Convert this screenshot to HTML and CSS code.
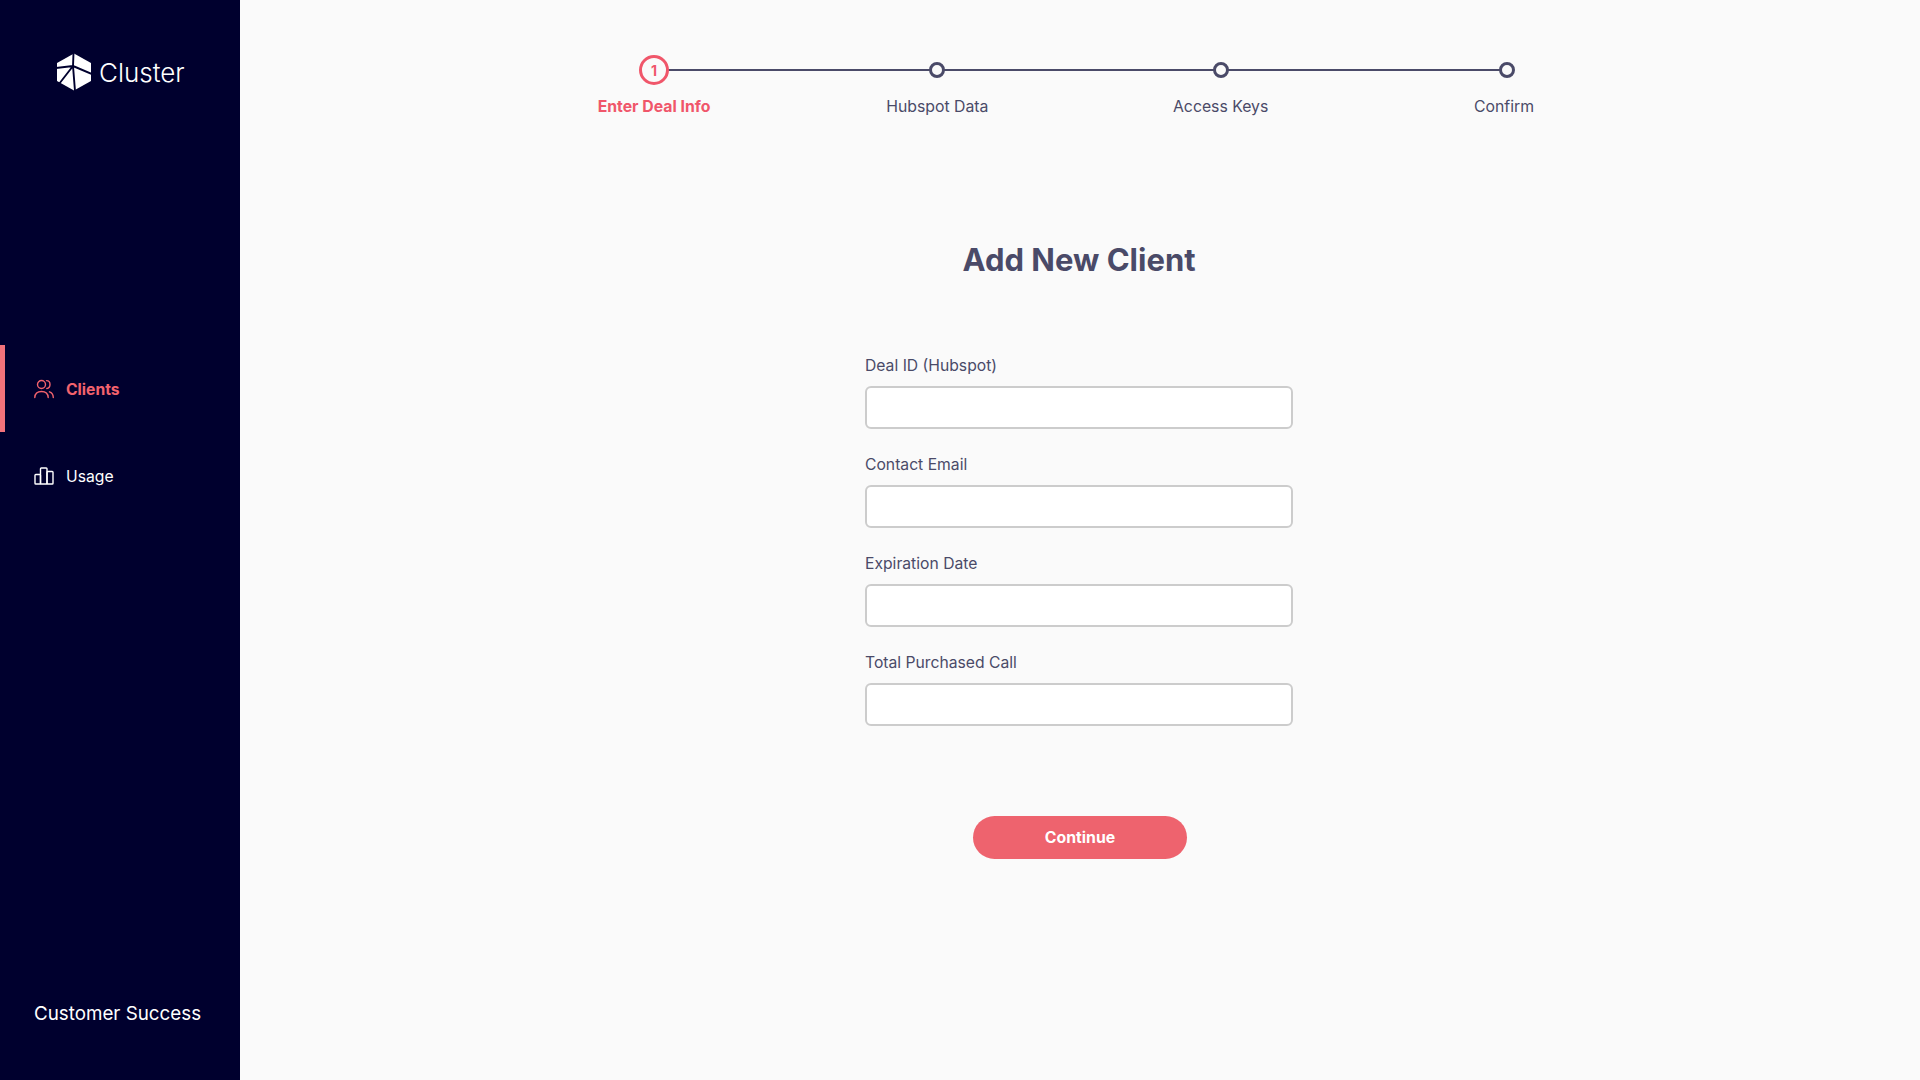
FILE: index.html
```html
<!DOCTYPE html>
<html lang="en">
<head>
    <meta charset="UTF-8">
    <meta name="viewport" content="width=device-width, initial-scale=1.0">
    <title>Cluster - Add New Client</title>
    <link rel="stylesheet" href="styles.css">
</head>
<body>
    <aside class="sidebar">
        <div class="logo">
            <svg class="logo-mark" width="36" height="38" viewBox="0 0 36 38">
                <polygon points="18,0.5 35,10 35,28 18,37.5 1,28 1,10" fill="#fff"/>
                <path d="M17 13 L17.5 0 M17 13 L0 15 M17 13 L3 31 M17 13 L19 38 M17 13 L36 21" stroke="#00002e" stroke-width="1.9" fill="none"/>
            </svg>
            <span class="logo-text">Cluster</span>
        </div>
        <nav class="nav">
            <a class="nav-item active" href="#">
                <svg width="20" height="20" viewBox="0 0 20 20" fill="none" stroke="currentColor" stroke-width="1.4" stroke-linecap="round">
                    <circle cx="7.5" cy="5.5" r="4"/>
                    <path d="M0.8 18.5 C1 14.5 3.5 12.5 7.5 12.5 C11.5 12.5 14 14.5 14.2 18.5"/>
                    <path d="M12.5 1.6 C15 1.6 16 3.6 16 5.5 C16 7.4 15 9.2 12.8 9.5"/>
                    <path d="M15.5 12.8 C17.8 13.5 19.2 15.5 19.3 18.5"/>
                </svg>
                <span>Clients</span>
            </a>
            <a class="nav-item" href="#">
                <svg width="20" height="18" viewBox="0 0 20 18" fill="none" stroke="currentColor" stroke-width="1.4" stroke-linejoin="round">
                    <rect x="1" y="7.5" width="5.5" height="9.5" rx="0.8"/>
                    <rect x="6.5" y="1" width="6.5" height="16" rx="0.8"/>
                    <rect x="13" y="4.5" width="6" height="12.5" rx="0.8"/>
                </svg>
                <span>Usage</span>
            </a>
        </nav>
        <div class="team">Customer Success</div>
    </aside>

    <main class="main">
        <ol class="stepper">
            <li class="step current"><span class="dot">1</span><span class="step-label">Enter Deal Info</span></li>
            <li class="step"><span class="dot"></span><span class="step-label">Hubspot Data</span></li>
            <li class="step"><span class="dot"></span><span class="step-label">Access Keys</span></li>
            <li class="step last"><span class="dot"></span><span class="step-label">Confirm</span></li>
        </ol>

        <h1>Add New Client</h1>

        <form class="client-form" onsubmit="return false;">
            <label class="field">Deal ID (Hubspot)<input type="text"></label>
            <label class="field">Contact Email<input type="text"></label>
            <label class="field">Expiration Date<input type="text"></label>
            <label class="field">Total Purchased Call<input type="text"></label>
            <button class="continue" type="submit">Continue</button>
        </form>
    </main>
</body>
</html>
```

FILE: styles.css
```css
* {
    box-sizing: border-box;
}

body {
    margin: 0;
    height: 1080px;
    display: flex;
    overflow: hidden;
    font-family: Inter, "Open Sans", sans-serif;
    background-color: #fafafa;
    color: #4a4a68;
}

.sidebar {
    width: 240px;
    flex-shrink: 0;
    display: flex;
    flex-direction: column;
    background-color: #00002e;
    color: #fff;
}

.logo {
    display: flex;
    align-items: center;
    gap: 7px;
    padding: 53px 0 0 56px;
}

.logo-text {
    font-size: 26px;
    font-weight: 300;
}

.nav {
    margin-top: 254px;
}

.nav-item {
    height: 87px;
    display: flex;
    align-items: center;
    gap: 12px;
    border-left: 5px solid transparent;
    padding-left: 29px;
    color: #fff;
    font-size: 15.7px;
    text-decoration: none;
}

.nav-item span {
    padding-top: 2px;
}

.nav-item.active {
    border-left-color: #f2727b;
    color: #f2626d;
    font-weight: 700;
}

.team {
    margin-top: auto;
    padding: 0 0 55px 34px;
    font-size: 18.8px;
}

.main {
    flex: 1;
    display: flex;
    flex-direction: column;
    align-items: center;
    padding-right: 2px;
}

.stepper {
    position: relative;
    width: 970px;
    margin: 55px 0 0;
    padding: 0;
    display: flex;
    justify-content: space-between;
    list-style: none;
}

.stepper::before {
    content: "";
    position: absolute;
    left: 60px;
    right: 57px;
    top: 14px;
    height: 2px;
    background-color: #4a4a68;
}

.step {
    position: relative;
    width: 120px;
    display: flex;
    flex-direction: column;
    align-items: center;
    font-size: 15.8px;
}

.dot {
    width: 16px;
    height: 16px;
    margin: 7px 0;
    border: 3px solid #4a4a68;
    border-radius: 50%;
    background-color: #fafafa;
}

.step.last .dot {
    margin-left: 6px;
}

.step.current .dot {
    width: 30px;
    height: 30px;
    margin: 0;
    display: flex;
    align-items: center;
    justify-content: center;
    border-color: #f0566a;
    color: #f0566a;
    font-size: 14px;
    font-weight: 700;
}

.step-label {
    margin-top: 12px;
    white-space: nowrap;
}

.step.current .step-label {
    color: #f0566a;
    font-weight: 700;
}

h1 {
    margin: 124px 0 0;
    font-size: 31px;
    line-height: 40px;
    font-weight: 700;
}

.client-form {
    width: 428px;
    margin-top: 76px;
    display: flex;
    flex-direction: column;
    gap: 26px;
}

.field {
    display: flex;
    flex-direction: column;
    gap: 11px;
    font-size: 15.7px;
    line-height: 19px;
}

.field input {
    height: 43px;
    width: 428px;
    border: 2px solid #cccccc;
    border-radius: 6px;
    background-color: #fff;
}

.continue {
    align-self: center;
    width: 214px;
    height: 43px;
    margin: 64px 0 0 2px;
    border: none;
    border-radius: 22px;
    background-color: #ee636e;
    color: #fff;
    font-family: inherit;
    font-size: 15.8px;
    font-weight: 700;
    cursor: pointer;
}
```
